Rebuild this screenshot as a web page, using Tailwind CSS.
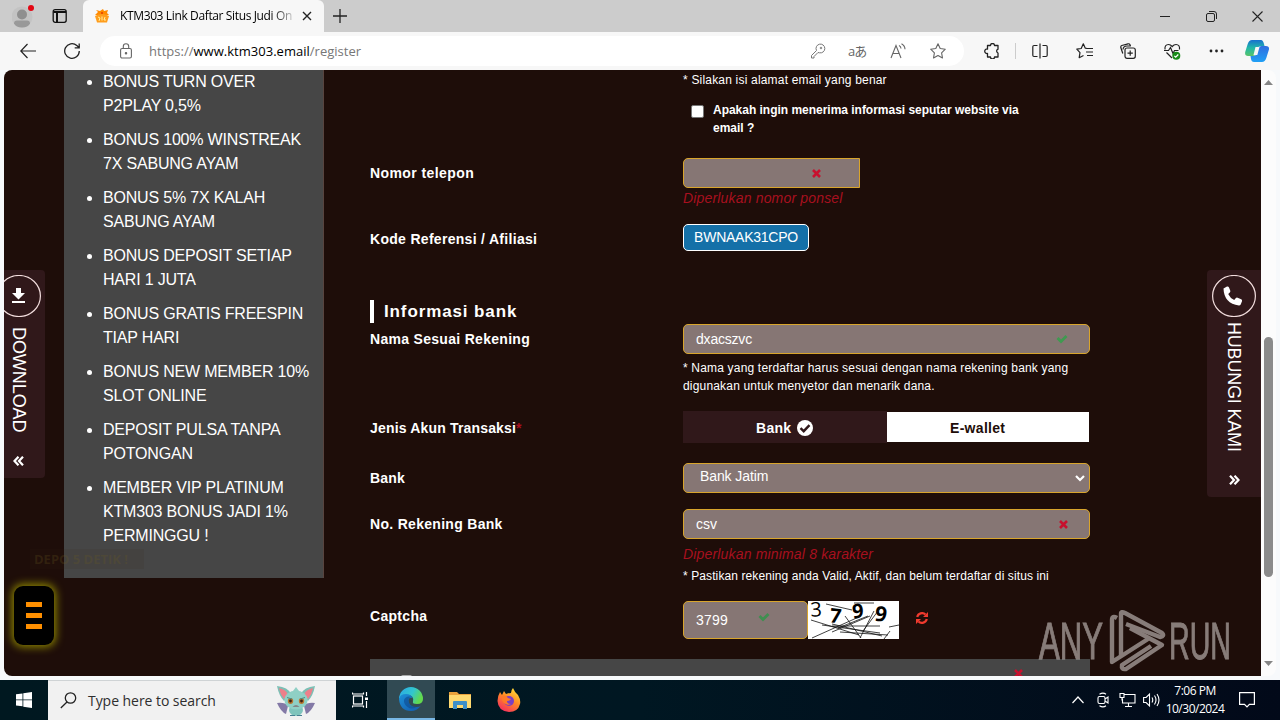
<!DOCTYPE html>
<html lang="id">
<head>
    <meta charset="UTF-8">
    <meta name="viewport" content="width=device-width, initial-scale=1.0">
    <title>KTM303 Link Daftar Situs Judi Online</title>
    <script src="https://cdn.jsdelivr.net/npm/@tailwindcss/browser@4"></script>
</head>
<body class="w-[1280px] h-[720px] overflow-hidden flex flex-col bg-[#f7f7f7] font-['Liberation_Sans',sans-serif]">

<!-- Tab strip -->
<header class="h-8 shrink-0 flex bg-[#cccccc] text-black">
    <div class="w-[83px] flex items-center rounded-br-md">
        <svg class="ml-3 w-6 h-7" viewBox="0 0 24 28" fill="none">
            <circle cx="10" cy="15" r="10.5" fill="#c3c3c3"/>
            <circle cx="10" cy="12.5" r="5" fill="#8f8f8f"/>
            <path d="M2 21.5q0-3 3-3h10q3 0 3 3-2 4-8 4t-8-4z" fill="#999"/>
            <circle cx="19" cy="6" r="3" fill="#e30613"/>
        </svg>
        <svg class="ml-4 w-4 h-4" viewBox="0 0 16 16" fill="none" stroke="#111" stroke-width="1.3">
            <rect x="1.2" y="1.7" width="13" height="12.6" rx="2"/>
            <path d="M1.5 4h12.5M5 4v10" stroke-width="2"/>
        </svg>
    </div>
    <div class="w-[241px] flex items-center bg-[#f7f7f7] rounded-t-md">
        <svg class="ml-[11px] w-4 h-4" viewBox="0 0 16 16">
            <path d="M2 2l4 1 3-2 1 2 4-1-1 3 2 2H1l3-3z" fill="#ff8a00"/>
            <path d="M1 8q7-4 14 0l-2 6.500H3z" fill="#ff9d1c"/>
            <path d="M4 9l2 1-1 3M8 8.500v4M11 9l-1 3h2" stroke="#fff0a0" fill="none"/>
            <circle cx="8" cy="5" r="1" fill="#e53b00"/>
        </svg>
        <span class="ml-[10px] w-[174px] overflow-hidden whitespace-nowrap font-['Open_Sans',sans-serif] text-[12px] tracking-[-0.37px] bg-linear-to-r from-black from-85% to-[#d8d8d8] bg-clip-text text-transparent">KTM303 Link Daftar Situs Judi On</span>
        <svg class="ml-2 w-[10px] h-[10px]" viewBox="0 0 10 10" stroke="#222" stroke-width="1.4"><path d="M1 1l8 8M9 1L1 9"/></svg>
    </div>
    <svg class="mt-2 ml-2 w-4 h-4" viewBox="0 0 16 16" stroke="#222" stroke-width="1.300"><path d="M8 1v14M1 8h14"/></svg>
    <div class="ml-auto flex items-center gap-[35px] pr-[17px]">
        <svg class="w-[11px] h-[10px]" viewBox="0 0 11 10" stroke="#222"><path d="M0 5.500h10"/></svg>
        <svg class="w-[11px] h-[11px]" viewBox="0 0 11 11" fill="none" stroke="#222"><rect x=".5" y="2.500" width="8" height="8" rx="1.500"/><path d="M3 .5h5q2.500 0 2.500 2.500v5"/></svg>
        <svg class="w-[11px] h-[11px]" viewBox="0 0 11 11" stroke="#222" stroke-width="1.100"><path d="M.5.5l10 10M10.500.5l-10 10"/></svg>
    </div>
</header>

<!-- Address bar -->
<nav class="h-[38px] shrink-0 flex items-center bg-[#f7f7f7]">
    <svg class="ml-5 w-4 h-4" viewBox="0 0 16 16" fill="none" stroke="#222" stroke-width="1.200"><path d="M16 8H.8M7.500 1L.8 8l6.700 7"/></svg>
    <svg class="ml-[28px] w-4 h-4" viewBox="0 0 16 16" fill="none" stroke="#222" stroke-width="1.300"><path d="M15.300 8A7.300 7.300 0 1 1 12.800 2.500L15 4.500M15.200.500v4.300h-4.500"/></svg>
    <div class="ml-5 w-[864px] h-[30px] flex items-center rounded-full bg-white">
        <svg class="ml-5 w-3 h-4" viewBox="0 0 12 16" fill="none" stroke="#666" stroke-width="1.100"><rect x=".6" y="5.500" width="10.800" height="9.500" rx="1.500"/><path d="M3.300 5.500V3.500a2.700 2.700 0 0 1 5.400 0v2"/><circle cx="6" cy="10.300" r=".7" fill="#666"/></svg>
        <span class="ml-[17px] pt-px whitespace-nowrap font-['Open_Sans',sans-serif] text-[13px] tracking-[0.02px] text-[#777]">https://<span class="text-black">www.ktm303.email</span>/register</span>
        <div class="ml-auto mr-[18px] flex items-center gap-6">
            <svg class="-mr-0.5 w-4 h-4" viewBox="0 0 16 16" fill="none" stroke="#777" stroke-width="1"><path d="M8 9.500L4 13.500v1.500H1.500V12.500l5-5a4.400 4.400 0 1 1 3 2.300z"/><circle cx="11" cy="5" r=".8"/></svg>
            <span class="w-[18px] text-[13px] leading-4 tracking-[-1px] whitespace-nowrap font-['Open_Sans','Noto_Sans_CJK_JP',sans-serif] text-[#666]">aあ</span>
            <svg class="w-4 h-4" viewBox="0 0 16 16" fill="none" stroke="#666" stroke-width="1.100"><path d="M1 15L6 2.500 11 15M2.800 10.500h6.400M9 2.500q2 1 2 3M11.500.7q3.500 2 3.500 5.500"/></svg>
            <svg class="w-4 h-4" viewBox="0 0 16 16" fill="none" stroke="#666" stroke-width="1.100" stroke-linejoin="round"><path d="M8 .8l2.200 4.700 5.100.7-3.700 3.600.9 5.200L8 12.500l-4.500 2.500.9-5.200L.7 6.200l5.100-.7z"/></svg>
        </div>
    </div>
    <svg class="ml-5 w-[15px] h-4" viewBox="0 0 15 16" fill="none" stroke="#222" stroke-width="1.300" stroke-linejoin="round"><path d="M3.500 2.500h3a2 2 0 0 1 4 0H14v3.700a2 2 0 0 0 0 3.800v4h-3.500a2 2 0 0 1-4 0h-3v-3.500a2.300 2.300 0 1 1 0-4.500z"/></svg>
    <div class="ml-[16px] w-px h-4 bg-[#ccc]"></div>
    <svg class="ml-4 w-4 h-4" viewBox="0 0 16 16" fill="none" stroke="#222" stroke-width="1.200"><path d="M5.500 2.500H2q-1.200 0-1.200 1.200v8.600Q.8 13.500 2 13.500h3.500M10.500 2.500H14q1.200 0 1.200 1.200v8.600q0 1.200-1.200 1.200h-3.500M8 .5v15"/></svg>
    <svg class="ml-[28px] w-[17px] h-4" viewBox="0 0 17 16" fill="none" stroke="#222" stroke-width="1.200" stroke-linejoin="round"><path d="M11 5.500L9.300 5.200 7.300.8 5.200 5.500.8 6.200 4 9.700l-.8 5 4.300-2.200M10 5.500h7M10 9h7M11 12.500h6"/></svg>
    <svg class="ml-[27px] w-4 h-4" viewBox="0 0 16 16" fill="none" stroke="#222" stroke-width="1.200"><rect x="5" y="5" width="10.300" height="10.300" rx="2"/><path d="M10.200 7.500v5.300M7.500 10.200h5.300M2.800 10.500L.8 4.500q-.3-1.500 1-2L8 .8q1.500-.3 2 1l.5 1.300M3 6.500q.3-3.500 4-3.500h4"/></svg>
    <svg class="ml-[28px] w-[17px] h-[17px]" viewBox="0 0 17 17" fill="none" stroke="#222" stroke-width="1.200"><path d="M8 15L2.500 9.500M1 6.500Q.5 1.500 4.500 1.500q2 0 3.700 2 1.700-2 3.800-2 4 0 3.500 5M0 7.500h4.500l2-3 2.500 6 1.500-3h4"/><circle cx="12.300" cy="12.700" r="4" fill="#168a16" stroke="none"/><path d="M10.300 12.800l1.400 1.400 2.600-2.700" stroke="#fff"/></svg>
    <svg class="ml-[27px] w-4 h-4" viewBox="0 0 16 16" fill="#222"><circle cx="3" cy="8" r="1.400"/><circle cx="8.500" cy="8" r="1.400"/><circle cx="14" cy="8" r="1.400"/></svg>
    <svg class="ml-[21px] w-6 h-6" viewBox="0 0 24 24">
        <defs>
            <linearGradient id="cpA" x1="0" y1="0" x2="0" y2="1"><stop offset="0" stop-color="#1870cf"/><stop offset=".5" stop-color="#21b8a8"/><stop offset="1" stop-color="#58c36a"/></linearGradient>
            <linearGradient id="cpB" x1="0" y1="0" x2="0" y2="1"><stop offset="0" stop-color="#2f6de0"/><stop offset="1" stop-color="#20a0f5"/></linearGradient>
        </defs>
        <path d="M7 1h9q2 0 3 4l.5 2h-4q-2 0-3 3l-1.500 5q-.7 2-3 2H3q-3.500 0-2.800-4l2.500-8Q4 1 7 1z" fill="url(#cpA)"/>
        <path d="M17 23H9q-2.500 0-3-3l-.5-3H9q2 0 3-3l1.500-5q.7-2 3-2h4.500q4 0 2.800 4l-2.500 8Q20 23 17 23z" fill="url(#cpB)"/>
        <path d="M10.500 8h4l-2.200 8H8.500z" fill="#f7f7f7"/>
    </svg>
</nav>

<!-- Page viewport -->
<div class="h-[610px] shrink-0 flex pl-1 pb-1 pr-1 bg-[#f7f9fb]">
    <main class="relative w-[1257px] h-[606px] flex overflow-hidden rounded-l-lg bg-[#1e0d09]">
        <!-- Bonus list -->
        <aside class="ml-[60px] w-[260px] h-[508px] bg-[#464646] text-white border-r border-[#58443f]">
            <ul class="list-disc pl-[39px] space-y-[10px] text-[16px] leading-6 tracking-[-0.19px] whitespace-nowrap">
                <li>BONUS TURN OVER<br>P2PLAY 0,5%</li>
                <li>BONUS 100% WINSTREAK<br>7X SABUNG AYAM</li>
                <li>BONUS 5% 7X KALAH<br>SABUNG AYAM</li>
                <li>BONUS DEPOSIT SETIAP<br>HARI 1 JUTA</li>
                <li>BONUS GRATIS FREESPIN<br>TIAP HARI</li>
                <li>BONUS NEW MEMBER 10%<br>SLOT ONLINE</li>
                <li>DEPOSIT PULSA TANPA<br>POTONGAN</li>
                <li>MEMBER VIP PLATINUM<br>KTM303 BONUS JADI 1%<br>PERMINGGU !</li>
            </ul>
        </aside>

        <!-- Registration form -->
        <form class="ml-[46px] w-[720px] text-white text-[14px]">
            <div class="pl-[313px] h-[88px]">
                <p class="pt-px text-[12px] leading-[18px] tracking-[0.19px]">* Silakan isi alamat email yang benar</p>
                <div class="mt-3 ml-2 flex gap-[9px]">
                    <span class="mt-1 w-[13px] h-[13px] shrink-0 rounded-[2px] bg-white border border-[#767676]"></span>
                    <p class="text-[12px] leading-[18px] font-bold tracking-[-0.02px] whitespace-nowrap">Apakah ingin menerima informasi seputar website via<br>email ?</p>
                </div>
            </div>

            <div class="h-[66px] grid grid-cols-[313px_407px]">
                <label class="leading-[30px] font-bold tracking-[0.42px]">Nomor telepon</label>
                <div>
                    <div class="w-[177px] h-[30px] flex items-center justify-end pr-[38px] rounded-l-[5px] border border-[#d9a52c] bg-[#867674]">
                        <svg class="w-[9px] h-[9px]" viewBox="0 0 9 9" stroke="#c8102e" stroke-width="2.600"><path d="M1 1l7 7M8 1L1 8"/></svg>
                    </div>
                    <p class="leading-5 italic tracking-[0.17px] text-[#a8101f]">Diperlukan nomor ponsel</p>
                </div>
            </div>

            <div class="h-[76px] grid grid-cols-[313px_407px]">
                <label class="leading-[30px] font-bold tracking-[0.3px]">Kode Referensi / Afiliasi</label>
                <div>
                    <span class="w-[126px] h-[27px] flex items-center justify-center rounded-[5px] border border-white bg-[#1470a8] tracking-[-0.25px]">BWNAAK31CPO</span>
                </div>
            </div>

            <h2 class="h-[23px] mb-px pl-[10px] border-l-4 border-white text-[17px] leading-6 font-bold tracking-[0.88px]">Informasi bank</h2>

            <div class="h-[87px] grid grid-cols-[313px_407px]">
                <label class="leading-[30px] font-bold tracking-[0.3px]">Nama Sesuai Rekening</label>
                <div>
                    <div class="h-[30px] flex items-center justify-between pl-3 pr-[21px] rounded-[5px] border border-[#d9a52c] bg-[#867674]">
                        <span class="tracking-[-0.2px]">dxacszvc</span>
                        <svg class="w-3 h-[10px]" viewBox="0 0 12 10" fill="none" stroke="#3f9a50" stroke-width="2.800"><path d="M1.500 4l3.500 3.500L10.500 2"/></svg>
                    </div>
                    <p class="mt-1 pt-px text-[12px] leading-[18px] tracking-[0.18px] whitespace-nowrap">* Nama yang terdaftar harus sesuai dengan nama rekening bank yang<br>digunakan untuk menyetor dan menarik dana.</p>
                </div>
            </div>

            <div class="h-[52px] grid grid-cols-[313px_407px]">
                <label class="leading-[34px] font-bold tracking-[0.17px]">Jenis Akun Transaksi<span class="text-[#a8101f]">*</span></label>
                <div class="h-8 flex font-bold tracking-[0.3px]">
                    <div class="w-[204px] pl-[73px] flex items-center gap-[6px] bg-[#30181a] pt-0.5">
                        Bank
                        <svg class="w-4 h-4" viewBox="0 0 16 16" fill="none"><circle cx="8" cy="8" r="8" fill="#fff"/><path d="M3.500 8.200l3.200 3 5.800-6" stroke="#30181a" stroke-width="2.400"/></svg>
                    </div>
                    <div class="my-px w-[202px] pl-[63px] pt-0.5 flex items-center bg-white text-[#1e0d09]">E-wallet</div>
                </div>
            </div>

            <div class="h-[46px] grid grid-cols-[313px_407px]">
                <label class="leading-[30px] font-bold tracking-[0.2px]">Bank</label>
                <div class="h-[30px] flex items-center justify-between pl-4 pr-1 rounded-[5px] border border-[#d9a52c] bg-[#867674]">
                    <span class="pb-[3px] tracking-[-0.1px]">Bank Jatim</span>
                    <svg class="w-[10px] h-[7px]" viewBox="0 0 10 7" fill="none" stroke="#fff" stroke-width="2.200"><path d="M1 1l4 4 4-4"/></svg>
                </div>
            </div>

            <div class="h-[92px] grid grid-cols-[313px_407px]">
                <label class="leading-[30px] font-bold tracking-[0.3px]">No. Rekening Bank</label>
                <div>
                    <div class="h-[30px] flex items-center justify-between pl-3 pr-[21px] rounded-[5px] border border-[#d9a52c] bg-[#867674]">
                        <span>csv</span>
                        <svg class="w-[9px] h-[9px]" viewBox="0 0 9 9" stroke="#c8102e" stroke-width="2.600"><path d="M1 1l7 7M8 1L1 8"/></svg>
                    </div>
                    <p class="mt-[5px] leading-5 italic tracking-[0.17px] text-[#a8101f]">Diperlukan minimal 8 karakter</p>
                    <p class="mt-[3px] text-[12px] leading-[18px] tracking-[0.1px] whitespace-nowrap">* Pastikan rekening anda Valid, Aktif, dan belum terdaftar di situs ini</p>
                </div>
            </div>

            <div class="h-[58px] grid grid-cols-[313px_407px]">
                <label class="leading-[30px] font-bold tracking-[0.3px]">Captcha</label>
                <div class="h-[38px] flex">
                    <div class="w-[125px] flex items-center justify-between pl-3 pr-[37px] rounded-[5px] border border-[#d9a52c] bg-[#867674]">
                        <span class="tracking-[0.2px]">3799</span>
                        <svg class="mb-[7px] w-3 h-[10px]" viewBox="0 0 12 10" fill="none" stroke="#3f8f50" stroke-width="2.800"><path d="M1.500 4l3.500 3.500L10.500 2"/></svg>
                    </div>
                    <svg class="w-[91px] h-[38px] bg-white overflow-visible" viewBox="0 0 91 38" font-family="Open Sans, sans-serif">
                        <text x="2.500" y="15.500" font-size="20" transform="rotate(-3 8 10)">3</text>
                        <text x="22" y="22" font-size="20" font-weight="bold" transform="rotate(6 28 14)">7</text>
                        <text x="44" y="17" font-size="20" font-weight="bold" transform="rotate(-5 50 10)">9</text>
                        <text x="67" y="20.500" font-size="21" font-weight="bold" transform="rotate(8 73 13)">9</text>
                        <path d="M3 19l48 15M4 37l49-22M18 3l26 6M14 24l58 8M24 31l38-16M24 25h48M37 15l16 22M52 37L66 10M55 30l18-24M30 27l30-12M32 31l48 3M46 2h20M81 26l10-2M76 38l6-8M24 23l50 12" fill="none" stroke="#111" stroke-width=".8"/>
                    </svg>
                    <svg class="ml-[17px] mt-[11px] w-3 h-3" viewBox="0 0 12 12" fill="none" stroke="#f03a2e" stroke-width="2.200"><path d="M1.200 5A5 5 0 0 1 9.500 2.500M10.800 7A5 5 0 0 1 2.500 9.500"/><path d="M12 0v5H7zM0 12V7h5z" fill="#f03a2e" stroke="none"/></svg>
                </div>
            </div>

            <div class="h-[17px] flex bg-[#464646] overflow-hidden">
                <span class="ml-[31px] mt-4 w-[11px] h-3 shrink-0 rounded-[2px] bg-[#aaa]"></span>
                <svg class="ml-[602px] mt-[10px] w-[9px] h-[9px] shrink-0" viewBox="0 0 9 9" stroke="#c8102e" stroke-width="2.600"><path d="M1 1l7 7M8 1L1 8"/></svg>
            </div>
        </form>

        <!-- Floating widgets -->
        <div class="absolute left-0 top-[200px] w-[41px] h-[208px] rounded-r-[4px] bg-[#30181a] text-white">
            <svg class="absolute -left-[7px] top-[5px] w-[44px] h-[42px]" viewBox="0 0 44 42" fill="none"><ellipse cx="22" cy="21" rx="21.400" ry="20.500" stroke="#f3dede" stroke-width="1.200"/><path d="M19 13h5v5h4l-6.500 6.500L15 18h4z" fill="#fff"/><path d="M15 27h13" stroke="#fff" stroke-width="2"/></svg>
            <span class="absolute left-[5px] top-[57px] [writing-mode:vertical-rl] text-[18px] leading-5 tracking-[-0.07px] whitespace-nowrap">DOWNLOAD</span>
            <svg class="absolute left-[9px] top-[186px] w-[11px] h-[10px]" viewBox="0 0 11 10" fill="none" stroke="#fff" stroke-width="2.200"><path d="M5.500.7L1.500 5l4 4.300M10 .7L6 5l4 4.300"/></svg>
        </div>
        <div class="absolute right-0 top-[200px] w-[54px] h-[227px] rounded-l-[4px] bg-[#30181a] text-white">
            <svg class="absolute left-[5px] top-[5px] w-[44px] h-[42px]" viewBox="0 0 44 42" fill="none"><ellipse cx="22" cy="21" rx="21.400" ry="20.500" stroke="#f3dede" stroke-width="1.200"/><path d="M11.500 13.500l3.500-2q1.500-.3 2 1l1.300 3.300q.2 1-.5 1.700l-1.600 1.400q2 4.200 6 6l1.700-1.900q.7-.7 1.700-.3l3.600 1.600q1.200.7.8 2l-1.300 3.200q-.5 1-1.700 1-15-2-15.500-17z" fill="#fff"/></svg>
            <span class="absolute left-[17px] top-[52px] [writing-mode:vertical-rl] text-[18px] leading-5 tracking-[-0.19px] whitespace-nowrap">HUBUNGI KAMI</span>
            <svg class="absolute left-[22px] top-[205px] w-[11px] h-[10px]" viewBox="0 0 11 10" fill="none" stroke="#fff" stroke-width="2.200"><path d="M1 .7L5 5 1 9.300M5.500.7L9.500 5l-4 4.300"/></svg>
        </div>
        <span class="absolute left-[26px] top-[479px] w-[114px] h-5 pl-1 leading-5 bg-[#3a2a10]/10 text-[13px] font-bold text-[#6b5a20]/25 font-['Open_Sans',sans-serif] whitespace-nowrap">DEPO 5 DETIK !</span>
        <div class="absolute left-[10px] top-[516px] w-10 h-[59px] rounded-[9px] bg-black flex flex-col items-center justify-center gap-[6px] shadow-[0_0_8px_2px_#8d8600]">
            <span class="w-4 h-[5px] bg-[#ff8f00]"></span>
            <span class="w-4 h-[5px] bg-[#ff8f00]"></span>
            <span class="w-4 h-[5px] bg-[#ff8f00]"></span>
        </div>
        <svg class="absolute left-[1034px] top-[539px] w-[194px] h-[64px] opacity-50" viewBox="0 0 194 64" fill="none" font-family="Liberation Sans, sans-serif">
            <g fill="#f0ebe8" stroke="#f0ebe8" stroke-width="1">
                <text x="1" y="50" font-size="52" textLength="64" lengthAdjust="spacingAndGlyphs">ANY</text>
                <text x="131" y="50" font-size="52" textLength="62" lengthAdjust="spacingAndGlyphs">RUN</text>
            </g>
            <g stroke="#f0ebe8" stroke-width="4.400" stroke-linejoin="round">
                <path d="M79 9q-5-3-5 2v42l36-23"/>
                <path d="M83 47V5q0-3 4-1l37 20q3 3-2 4L88 15"/>
                <path d="M92 19L124 36 88 60q-5 1-4-4l29-19"/>
            </g>
        </svg>
    </main>
    <!-- Scrollbar -->
    <div class="w-[15px] h-[606px] flex flex-col items-center rounded-r-lg bg-[#fcfcfc]">
        <svg class="mt-[10px] w-[9px] h-[5px]" viewBox="0 0 9 5" fill="#858585"><path d="M4.500 0L9 5H0z"/></svg>
        <div class="mt-[252px] w-[9px] h-[240px] rounded-full bg-[#8b8b8b]"></div>
        <svg class="mt-[84px] w-[9px] h-[5px]" viewBox="0 0 9 5" fill="#858585"><path d="M4.500 5L9 0H0z"/></svg>
    </div>
</div>

<!-- Taskbar -->
<footer class="h-10 shrink-0 flex items-center bg-linear-to-r from-[#001820] via-[#001722] to-[#020919] text-white font-['Open_Sans',sans-serif]">
    <svg class="mx-4 w-4 h-4" viewBox="0 0 16 16" fill="#fff"><path d="M0 2.300l6.500-.9v6H0zM7.300 1.300L16 0v7.400H7.300zM0 8.300h6.500v6L0 13.500zM7.300 8.300H16V16l-8.700-1.300z"/></svg>
    <div class="w-[288px] h-10 flex items-center bg-[#f1f1f1] border-t border-[#cfd3d5] text-[#2e2e2e]">
        <svg class="ml-3 w-[17px] h-[17px]" viewBox="0 0 17 17" fill="none" stroke="#222" stroke-width="1.300"><circle cx="10.500" cy="6" r="5.200"/><path d="M7 10L.8 16"/></svg>
        <span class="ml-[11px] text-[14px] tracking-[-0.05px] whitespace-nowrap">Type here to search</span>
        <svg class="ml-auto mr-5 w-10 h-8" viewBox="0 0 40 32">
            <path d="M1 18q8-1 11 3l-2 8q-5-2-9-11zM39 18q-8-1-11 3l2 8q5-2 9-11z" fill="#8379a6"/>
            <path d="M1 1q11 1 14 8l-7 7Q3 11 1 1zM39 1q-11 1-14 8l7 7q5-5 7-15z" fill="#7dbfb5"/>
            <path d="M3 3q8 2 9 7l-4 4Q4 9 3 3zM37 3q-8 2-9 7l4 4q4-5 5-11z" fill="#ed7f8a"/>
            <ellipse cx="20" cy="25" rx="7" ry="6" fill="#7fc4bc"/>
            <ellipse cx="20" cy="15" rx="11.500" ry="9.500" fill="#8fd0c5"/>
            <path d="M17 6l3-4 3 4z" fill="#8fd0c5"/>
            <ellipse cx="14.500" cy="16" rx="2.700" ry="3" fill="#b9752e"/><ellipse cx="25.500" cy="16" rx="2.700" ry="3" fill="#b9752e"/>
            <circle cx="14.500" cy="16" r="1.400" fill="#3a2317"/><circle cx="25.500" cy="16" r="1.400" fill="#3a2317"/>
            <path d="M11 12.500l5 1.500M29 12.500l-5 1.500" stroke="#4c8d88"/>
            <path d="M16.500 21.500q3.500-2 7 0z" fill="#7c3d49"/>
            <path d="M14 30h5v1h-5zM21 30h5v1h-5z" fill="#477f91"/>
        </svg>
    </div>
    <div class="w-[51px] flex justify-center">
        <svg class="mr-1 w-4 h-4" viewBox="0 0 16 16" fill="none" stroke="#fff" stroke-width="1.200"><rect x="1.500" y="4" width="9" height="8"/><path d="M.5.500v1.500h11V.5M.5 15.500V14h11v1.500M14.500 0v4M14.500 9v7"/><path d="M13 5.500h3v2.500h-3z" fill="#fff" stroke="none"/></svg>
    </div>
    <div class="w-12 h-10 flex items-center justify-center bg-[#314a53] border-b-2 border-[#78b7e5]">
        <svg class="w-6 h-6" viewBox="0 0 24 24">
            <defs>
                <linearGradient id="edA" x1="0" y1="0" x2="1" y2=".4"><stop offset="0" stop-color="#2aa7e8"/><stop offset=".6" stop-color="#32c6ce"/><stop offset="1" stop-color="#62d94e"/></linearGradient>
                <linearGradient id="edB" x1="0" y1="0" x2="1" y2="1"><stop offset="0" stop-color="#1d91d8"/><stop offset="1" stop-color="#1257aa"/></linearGradient>
            </defs>
            <path d="M0 12A12 12 0 0 1 24 12q0 5-6 5-5 0-4-2.500Q15 8 9 8T0 12z" fill="url(#edA)"/>
            <path d="M0 12q1-5 7-5 5 0 6.500 4-4-1-4 3 1 6 8 6 3 0 4.500-1.500Q18 24 12 24 1 24 0 12z" fill="url(#edB)"/>
            <path d="M5 13q2-5 8-3-4 0-3.500 4 1 6 8 6-5 3-9 0-4-3-3.500-7z" fill="#0d4a8f" opacity=".6"/>
        </svg>
    </div>
    <svg class="ml-[14px] w-[22px] h-[19px]" viewBox="0 0 22 19"><path d="M0 1h8l2 2h12v14H0z" fill="#eaa23c"/><path d="M0 4h22v13H0z" fill="#ffd970"/><path d="M4 18V11q0-1 1-1h12q1 0 1 1v7h-4v-4H8v4z" fill="#3f8fc8"/></svg>
    <svg class="ml-[26px] w-6 h-6" viewBox="0 0 24 24">
        <defs><linearGradient id="ffx" x1=".8" y1="0" x2=".2" y2="1"><stop offset="0" stop-color="#ffe23a"/><stop offset=".45" stop-color="#ff8a24"/><stop offset="1" stop-color="#f52863"/></linearGradient></defs>
        <path d="M3 4l2 3 2-4 2 3q3-1 5-1 0-3 2-5 2 5 5 7 3 5 2 9-2 8-11 8Q1 23 .500 13 .5 8 3 4z" fill="url(#ffx)"/>
        <circle cx="12" cy="13" r="5" fill="#7a3fc4"/><path d="M5 8q4-1 6 2l3 1q-1 2-4 2 0 3 4 3-4 2-7-1-3-3-2-7z" fill="#ff7a28"/>
    </svg>
    <div class="ml-auto flex items-center">
        <svg class="w-3 h-2" viewBox="0 0 12 8" fill="none" stroke="#fff" stroke-width="1.200"><path d="M.5 7L6 1l5.500 6"/></svg>
        <svg class="ml-[13px] w-3 h-4" viewBox="0 0 12 16" fill="none" stroke="#fff" stroke-width="1.100"><rect x="1" y="4.500" width="7" height="7" rx="1.500"/><path d="M8 7l3-2v6L8 9M2.500 2.200Q6 0 9 2.200M2.500 13.800Q6 16 9 13.800"/></svg>
        <svg class="ml-[10px] w-[17px] h-4" viewBox="0 0 17 16" fill="none" stroke="#fff" stroke-width="1.100"><path d="M5 2.500h11v8.500H3.500V6.500M9.500 11v3.500M6 14.500h7M1 1.500h4v4H1zM3 5.500v3"/></svg>
        <svg class="ml-[7px] w-[17px] h-4" viewBox="0 0 17 16" fill="none" stroke="#fff" stroke-width="1.100"><path d="M.6 5.500h2.500L6.500 2v12L3.100 10.500H.6zM9 5.500q1.500 2.500 0 5M11.500 3.500q3 4.500 0 9M14 2q4 6 0 12"/></svg>
        <div class="ml-[5px] w-[60px] text-center text-[12px] leading-[18px] tracking-[-0.5px] whitespace-nowrap">7:06 PM<br>10/30/2024</div>
        <svg class="ml-[14px] mr-[25px] w-4 h-4" viewBox="0 0 16 16" fill="none" stroke="#fff" stroke-width="1.200"><path d="M.6.6h14.800v11.800h-5L8 15l-2.500-2.600H.6z"/></svg>
    </div>
</footer>
</body>
</html>
